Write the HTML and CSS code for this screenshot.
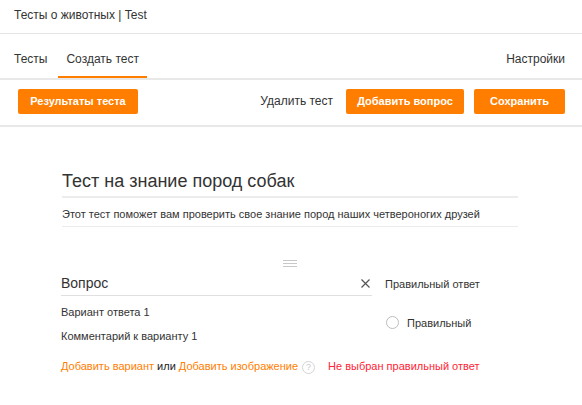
FILE: index.html
```html
<!DOCTYPE html>
<html lang="ru">
<head>
<meta charset="utf-8">
<link rel="stylesheet" href="styles.css">
</head>
<body>
<div class="app-title">Тесты о животных | Test</div>
<nav class="tabs">
  <div class="tabs-left">
    <span class="tab">Тесты</span>
    <span class="tab active">Создать тест</span>
  </div>
  <span class="tab settings">Настройки</span>
</nav>
<div class="toolbar">
  <button class="btn">Результаты теста</button>
  <div class="toolbar-right">
    <span class="link-plain">Удалить тест</span>
    <button class="btn btn-add">Добавить вопрос</button>
    <button class="btn btn-save">Сохранить</button>
  </div>
</div>
<main class="editor">
  <div class="test-head">
    <div class="field field-title">Тест на знание пород собак</div>
    <div class="field field-desc">Этот тест поможет вам проверить свое знание пород наших четвероногих друзей</div>
  </div>
  <div class="drag">
    <svg width="14" height="8" viewBox="0 0 14 8"><path d="M0 0.5H14M0 3.5H14M0 6.5H14" stroke="#c8c8c8" stroke-width="1"/></svg>
  </div>
  <div class="question">
    <div class="q-left">
      <div class="q-input">
        <span>Вопрос</span>
        <svg class="close" width="9" height="9" viewBox="0 0 9 9"><path d="M0.5 0.5L8.5 8.5M8.5 0.5L0.5 8.5" stroke="#555" stroke-width="1.2"/></svg>
      </div>
      <div class="variant">Вариант ответа 1</div>
      <div class="comment">Комментарий к варианту 1</div>
    </div>
    <div class="q-right">
      <div class="right-head">Правильный ответ</div>
      <label class="radio"><span class="circle"></span>Правильный</label>
    </div>
  </div>
  <div class="actions"><span class="orange">Добавить вариант</span> <span class="or">или</span> <span class="orange">Добавить изображение</span><span class="help">?</span><span class="error">Не выбран правильный ответ</span></div>
</main>
</body>
</html>
```
FILE: styles.css
```css
* { box-sizing: border-box; }
body {
  margin: 0;
  font-family: "Liberation Sans", Arial, sans-serif;
  color: #333;
  background: #fff;
  width: 582px;
}
.app-title {
  height: 34px;
  line-height: 31px;
  padding: 0 14px;
  font-size: 12px;
  border-bottom: 1px solid #e6e6e6;
}
.tabs {
  display: flex;
  justify-content: space-between;
  height: 46px;
  padding: 0 17px 0 6px;
  border-bottom: 2px solid #e8e8e8;
  font-size: 12px;
}
.tabs-left { display: flex; gap: 3px; }
.tab {
  display: flex;
  align-items: center;
  padding: 6px 8px 0;
  height: 44px;
}
.tab.active { border-bottom: 2px solid #ff7e00; padding-top: 8px; }
.settings { padding-right: 0; }
.toolbar {
  display: flex;
  justify-content: space-between;
  align-items: center;
  height: 47px;
  padding: 0 17px 3px 18px;
  border-bottom: 2px solid #e8e8e8;
}
.toolbar-right { display: flex; align-items: center; }
.btn {
  height: 25px;
  background: #ff7e00;
  color: #fff;
  border: 0;
  border-radius: 2px;
  font-family: inherit;
  font-size: 11px;
  font-weight: bold;
  padding: 0;
  width: 120px;
}
.link-plain { font-size: 12px; margin-right: 13px; }
.btn-add { width: 118px; margin-right: 10px; }
.btn-save { width: 91px; }
.editor { padding: 42px 0 0 61px; }
.test-head { width: 456px; margin-left: 1px; }
.field { border-bottom: 2px solid #ececec; }
.field-title {
  font-size: 18px;
  height: 29px;
  line-height: 24px;
}
.field-desc {
  font-size: 11px;
  height: 29px;
  line-height: 32px;
  border-bottom-width: 1px;
}
.drag {
  width: 456px;
  display: flex;
  justify-content: center;
  padding-top: 33px;
  height: 47px;
  margin-left: 1px;
}
.question { display: flex; gap: 13px; }
.q-left { width: 311px; font-size: 11px; }
.q-input {
  display: flex;
  justify-content: space-between;
  align-items: center;
  height: 22px;
  padding-right: 2px;
  font-size: 14px;
  border-bottom: 1px solid #e0e0e0;
  padding-bottom: 3px;
}
.close { margin-top: 1px; }
.variant { margin-top: 9px; line-height: 14px; }
.comment { margin-top: 10px; line-height: 14px; }
.q-right { font-size: 11px; }
.right-head { height: 20px; line-height: 20px; }
.radio {
  display: flex;
  align-items: center;
  gap: 8px;
  margin-top: 22px;
  margin-left: 1px;
}
.circle {
  width: 13px;
  height: 13px;
  border: 1px solid #bdbdbd;
  border-radius: 50%;
  display: inline-block;
}
.actions {
  margin-top: 16px;
  font-size: 11px;
  white-space: nowrap;
  line-height: 14px;
}
.orange { color: #ff7e00; }
.or { color: #222; }
.help {
  width: 13px;
  height: 13px;
  line-height: 11px;
  border: 1px solid #d4d4d4;
  border-radius: 50%;
  color: #c8c8c8;
  font-size: 9px;
  display: inline-block;
  text-align: center;
  margin-left: 4px;
  vertical-align: middle;
}
.error { color: #ff2435; margin-left: 13px; }
```
